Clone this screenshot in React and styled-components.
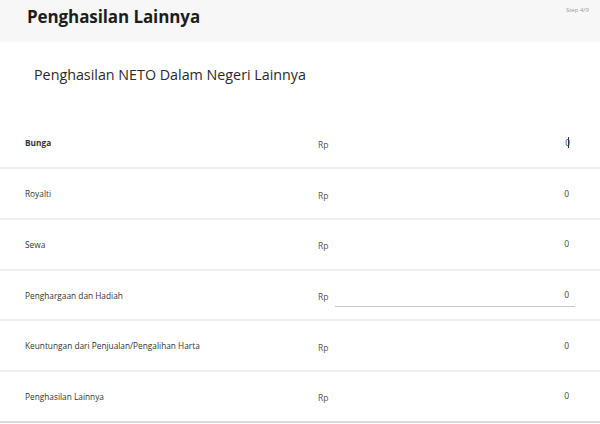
import React from 'react';
import styled, { createGlobalStyle } from 'styled-components';

const GlobalStyle = createGlobalStyle`
  body {
    margin: 0;
    background: #fff;
    font-family: 'Open Sans', 'Liberation Sans', sans-serif;
    color: #222;
  }
`;

const rows = [
  { label: 'Bunga', value: '0', active: true },
  { label: 'Royalti', value: '0' },
  { label: 'Sewa', value: '0' },
  { label: 'Penghargaan dan Hadiah', value: '0', underline: true },
  { label: 'Keuntungan dari Penjualan/Pengalihan Harta', value: '0' },
  { label: 'Penghasilan Lainnya', value: '0' },
];

const App = () => {
  return (
    <Page>
      <GlobalStyle />
      <Header>
        <Title>Penghasilan Lainnya</Title>
        <Step>Step 4/9</Step>
      </Header>
      <Section>
        <Subtitle>Penghasilan NETO Dalam Negeri Lainnya</Subtitle>
      </Section>
      <List>
        {rows.map((row) => (
          <Row key={row.label}>
            <Label bold={row.active}>{row.label}</Label>
            <Currency>Rp</Currency>
            <Field underline={row.underline}>
              <Value>
                {row.value}
                {row.active && <Caret />}
              </Value>
            </Field>
          </Row>
        ))}
      </List>
    </Page>
  );
};

export default App;

const Page = styled.div`
  width: 600px;
  height: 424px;
  overflow: hidden;
  background: #fff;
`;

const Header = styled.div`
  height: 42px;
  background: #f7f7f7;
  display: flex;
  justify-content: space-between;
  align-items: flex-start;
  padding: 0 11px 0 27px;
`;

const Title = styled.h1`
  margin: 5px 0 0;
  font-size: 17px;
  font-weight: 700;
  color: #1e1e1e;
  letter-spacing: -0.1px;
`;

const Step = styled.span`
  margin-top: 6px;
  font-size: 6px;
  color: #9a9a9a;
`;

const Section = styled.div`
  height: 76px;
  padding: 23px 0 0 34px;
  box-sizing: border-box;
`;

const Subtitle = styled.h2`
  margin: 0;
  font-size: 14.3px;
  font-weight: 400;
  color: #2a2a2a;
`;

const List = styled.div`
  display: flex;
  flex-direction: column;
`;

const Row = styled.div`
  height: 48.7px;
  display: grid;
  grid-template-columns: 293px 17px 240px;
  align-items: center;
  padding-left: 25px;
  border-bottom: 2px solid #efefef;

  &:first-child {
    height: 49.3px;
  }

  &:last-child {
    border-bottom-color: #d9d9d9;
  }
`;

const Label = styled.span`
  font-size: 8.3px;
  font-weight: ${(p) => (p.bold ? 700 : 400)};
  color: #333;
`;

const Currency = styled.span`
  font-size: 8.5px;
  color: #555;
  padding-top: 3px;
`;

const Field = styled.div`
  height: 24px;
  display: flex;
  align-items: center;
  justify-content: flex-end;
  padding-right: 6px;
  border-bottom: 1px solid ${(p) => (p.underline ? '#c8c8c8' : 'transparent')};
  box-sizing: border-box;
`;

const Value = styled.span`
  font-size: 8.5px;
  color: #444;
  display: flex;
  align-items: center;
`;

const Caret = styled.span`
  width: 1px;
  height: 11px;
  background: #333;
  margin-left: -2px;
`;
